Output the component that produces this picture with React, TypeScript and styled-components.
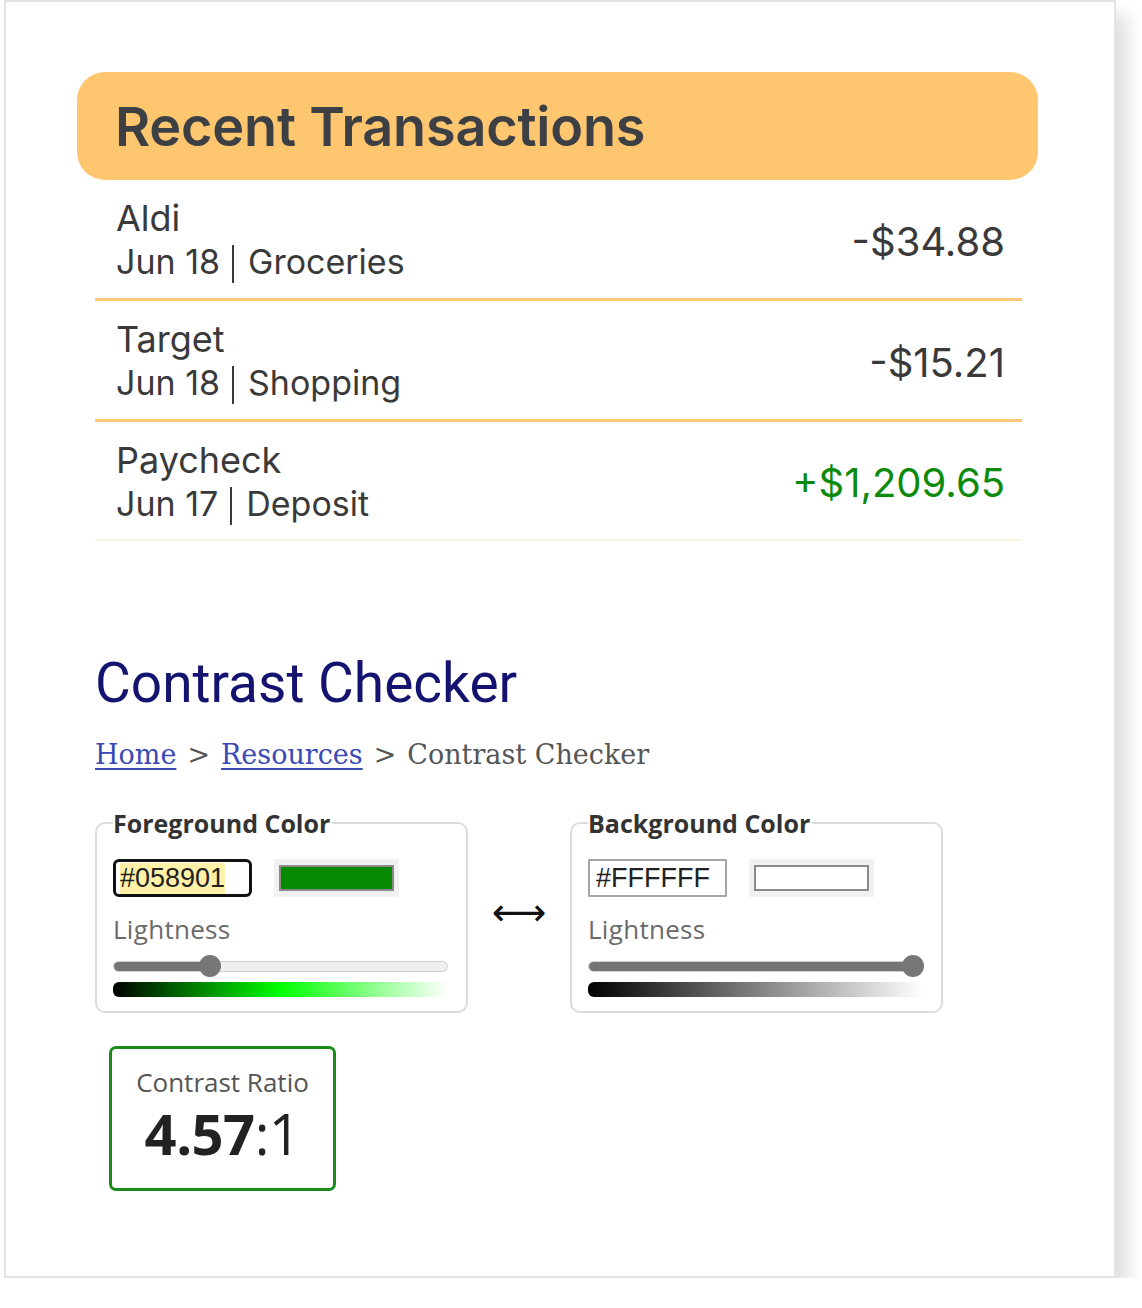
import React from "react";
import styled, { createGlobalStyle } from "styled-components";

const Global = createGlobalStyle`
  html, body { margin: 0; padding: 0; background: #ffffff; }
  body { font-family: "Inter", "Noto Sans", sans-serif; }
  * { box-sizing: border-box; }
`;

const Card = styled.div`
  margin-left: 4px;
  width: 1112px;
  height: 1278px;
  border: 2px solid #e3e3e3;
  background: #ffffff;
  box-shadow: 12px 14px 16px rgba(0, 0, 0, 0.12);
  padding: 70px 0 0 71px;
`;

const Transactions = styled.section`
  width: 961px;
`;

const Header = styled.div`
  height: 108px;
  background: #ffc670;
  border-radius: 28px;
  display: flex;
  align-items: center;
  padding-left: 38px;
`;

const HeaderTitle = styled.h2`
  margin: 0;
  font-family: "Inter", sans-serif;
  font-weight: 600;
  font-size: 54px;
  color: #3c3f44;
  letter-spacing: -0.2px;
`;

const List = styled.ul`
  list-style: none;
  margin: 0 16px 0 18px;
  padding: 0;
`;

const Row = styled.li<{ $last?: boolean }>`
  height: ${(p) => (p.$last ? 119 : 121)}px;
  display: flex;
  align-items: center;
  justify-content: space-between;
  padding: 2px 17px 0 21px;
  border-bottom: ${(p) => (p.$last ? "2px solid #fdf3e2" : "3px solid #ffc878")};
`;

const Info = styled.div`
  display: flex;
  flex-direction: column;
`;

const Name = styled.span`
  font-size: 36px;
  line-height: 44px;
  color: #3a3a3a;
`;

const Meta = styled.span`
  font-size: 34px;
  line-height: 44px;
  color: #3a3a3a;
`;

const Divider = styled.span`
  display: inline-block;
  width: 2px;
  height: 38px;
  background: #3a3a3a;
  margin: 0 14px 0 12px;
  vertical-align: -9px;
`;

const Amount = styled.span<{ $positive?: boolean }>`
  font-size: 40px;
  color: ${(p) => (p.$positive ? "#0b8a0b" : "#3a3a3a")};
  margin-top: 2px;
`;

const Checker = styled.section`
  margin: 110px 0 0 18px;
`;

const Heading = styled.h1`
  margin: 0;
  font-family: "Roboto", sans-serif;
  font-weight: 400;
  font-size: 55px;
  line-height: 64px;
  color: #141470;
`;

const Crumbs = styled.nav`
  margin-top: 23px;
  font-family: "DejaVu Serif", serif;
  font-size: 27px;
  line-height: 34px;
  color: #555555;
`;

const CrumbLink = styled.a`
  color: #3a49b5;
  text-decoration: underline;
  text-underline-offset: 4px;
  text-decoration-thickness: 2px;
`;

const Sep = styled.span`
  margin: 0 11px;
`;

const Tools = styled.div`
  margin-top: 37px;
  display: flex;
  align-items: center;
`;

const Group = styled.fieldset`
  margin: 0;
  width: 373px;
  height: 204px;
  border: 2px solid #dcdcdc;
  border-radius: 10px;
  padding: 22px 18px 0 16px;
  font-family: "Open Sans", sans-serif;
`;

const Legend = styled.legend`
  padding: 0 2px 0 0;
  font-weight: 700;
  font-size: 25px;
  line-height: 28px;
  color: #333333;
`;

const Inputs = styled.div`
  display: flex;
  gap: 22px;
  align-items: center;
`;

const HexField = styled.div<{ $focused?: boolean }>`
  width: 139px;
  height: 38px;
  display: flex;
  align-items: center;
  padding-left: ${(p) => (p.$focused ? 4 : 6)}px;
  border: ${(p) => (p.$focused ? "3px solid #111111" : "2px solid #a5a5a5")};
  border-radius: ${(p) => (p.$focused ? 6 : 1)}px;
  font-family: "Liberation Sans", Arial, sans-serif;
  font-size: 27px;
  color: #222222;
`;

const Selected = styled.span`
  background: #fff2a8;
`;

const Swatch = styled.div`
  width: 125px;
  height: 38px;
  background: #f1f1f1;
  padding: 6px 5px;
`;

const SwatchInner = styled.div<{ $color: string }>`
  height: 100%;
  background: ${(p) => p.$color};
  border: 2px solid #8a8a8a;
`;

const Label = styled.div`
  margin-top: 15px;
  font-size: 26px;
  line-height: 34px;
  letter-spacing: 0.3px;
  color: #6a6a6a;
`;

const Slider = styled.div`
  position: relative;
  margin-top: 9px;
  height: 22px;
  display: flex;
  align-items: center;
`;

const Track = styled.div`
  width: 100%;
  height: 11px;
  border-radius: 6px;
  background: #efefef;
  border: 1px solid #cfcfcf;
  overflow: hidden;
`;

const Fill = styled.div`
  height: 100%;
  background: #747474;
`;

const Thumb = styled.div`
  position: absolute;
  top: 0;
  width: 22px;
  height: 22px;
  border-radius: 50%;
  background: #777777;
  transform: translateX(-11px);
`;

const Ramp = styled.div<{ $mid: string }>`
  margin-top: 5px;
  height: 15px;
  border-radius: 6px 0 0 6px;
  background: linear-gradient(to right, #000000 0%, ${(p) => p.$mid} 50%, #ffffff 100%);
`;

const Swap = styled.div`
  width: 102px;
  text-align: center;
  font-family: "DejaVu Sans", sans-serif;
  font-size: 38px;
  color: #111111;
  margin-top: 2px;
`;

const Ratio = styled.div`
  margin: 33px 0 0 14px;
  width: 227px;
  height: 145px;
  border: 3px solid #1a8a1a;
  border-radius: 7px;
  display: flex;
  flex-direction: column;
  align-items: center;
  padding-top: 16px;
  font-family: "Open Sans", sans-serif;
  color: #222222;
`;

const RatioLabel = styled.div`
  font-size: 26px;
  line-height: 34px;
  color: #555555;
`;

const RatioValue = styled.div`
  font-size: 56px;
  line-height: 68px;
  letter-spacing: -0.5px;
`;

const Strong = styled.b`
  font-weight: 700;
`;

type Tx = { name: string; date: string; cat: string; amount: string; positive?: boolean };

const txs: Tx[] = [
  { name: "Aldi", date: "Jun 18", cat: "Groceries", amount: "-$34.88" },
  { name: "Target", date: "Jun 18", cat: "Shopping", amount: "-$15.21" },
  { name: "Paycheck", date: "Jun 17", cat: "Deposit", amount: "+$1,209.65", positive: true },
];

function ColorGroup(props: {
  title: string;
  hex: string;
  focused?: boolean;
  swatch: string;
  mid: string;
  value: number;
}) {
  return (
    <Group>
      <Legend>{props.title}</Legend>
      <Inputs>
        <HexField $focused={props.focused}>
          {props.focused ? <Selected>{props.hex}</Selected> : props.hex}
        </HexField>
        <Swatch>
          <SwatchInner $color={props.swatch} />
        </Swatch>
      </Inputs>
      <Label>Lightness</Label>
      <Slider>
        <Track>
          <Fill style={{ width: `${props.value}%` }} />
        </Track>
        <Thumb style={{ left: `${props.value}%` }} />
      </Slider>
      <Ramp $mid={props.mid} />
    </Group>
  );
}

export default function App() {
  return (
    <>
      <Global />
      <Card>
        <Transactions>
          <Header>
            <HeaderTitle>Recent Transactions</HeaderTitle>
          </Header>
          <List>
            {txs.map((t, i) => (
              <Row key={t.name} $last={i === txs.length - 1}>
                <Info>
                  <Name>{t.name}</Name>
                  <Meta>
                    {t.date}
                    <Divider />
                    {t.cat}
                  </Meta>
                </Info>
                <Amount $positive={t.positive}>{t.amount}</Amount>
              </Row>
            ))}
          </List>
        </Transactions>
        <Checker>
          <Heading>Contrast Checker</Heading>
          <Crumbs>
            <CrumbLink href="#">Home</CrumbLink>
            <Sep>&gt;</Sep>
            <CrumbLink href="#">Resources</CrumbLink>
            <Sep>&gt;</Sep>
            Contrast Checker
          </Crumbs>
          <Tools>
            <ColorGroup
              title="Foreground Color"
              hex="#058901"
              focused
              swatch="#058901"
              mid="#00ff00"
              value={29}
            />
            <Swap>⟷</Swap>
            <ColorGroup
              title="Background Color"
              hex="#FFFFFF"
              swatch="#ffffff"
              mid="#808080"
              value={97}
            />
          </Tools>
          <Ratio>
            <RatioLabel>Contrast Ratio</RatioLabel>
            <RatioValue>
              <Strong>4.57</Strong>:1
            </RatioValue>
          </Ratio>
        </Checker>
      </Card>
    </>
  );
}
